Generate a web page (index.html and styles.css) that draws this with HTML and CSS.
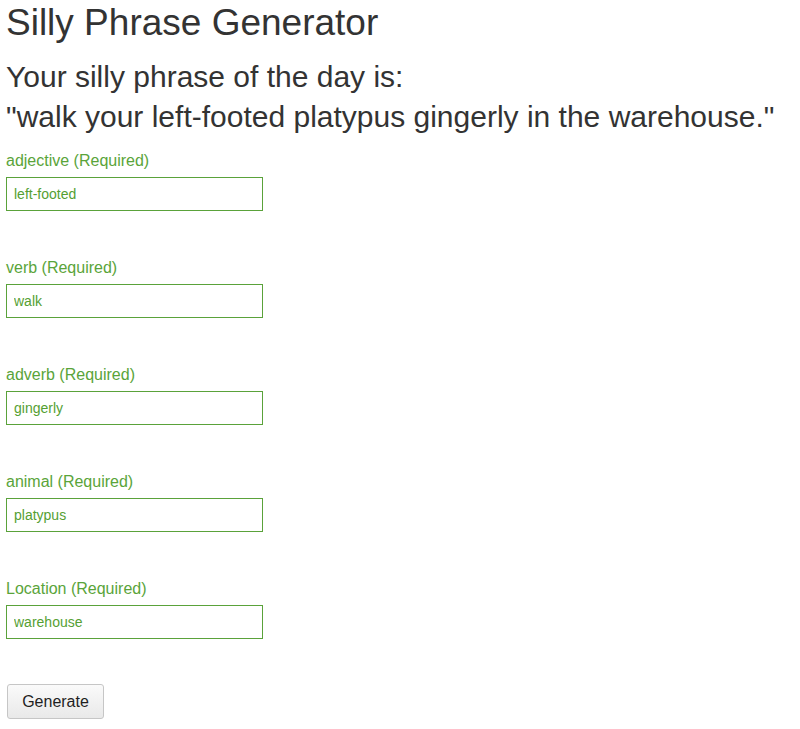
FILE: index.html
```html
<!DOCTYPE html>
<html>
<head>
<meta charset="utf-8">
<link rel="stylesheet" href="styles.css">
<title>Silly Phrase Generator</title>
</head>
<body>
<div class="page">
  <h1 class="title">Silly Phrase Generator</h1>
  <h2 class="phrase">Your silly phrase of the day is:<br>"walk your left-footed platypus gingerly in the warehouse."</h2>
  <form class="form">
    <div class="field">
      <label class="label">adjective (Required)</label>
      <input class="input" type="text" value="left-footed">
    </div>
    <div class="field">
      <label class="label">verb (Required)</label>
      <input class="input" type="text" value="walk">
    </div>
    <div class="field">
      <label class="label">adverb (Required)</label>
      <input class="input" type="text" value="gingerly">
    </div>
    <div class="field">
      <label class="label">animal (Required)</label>
      <input class="input" type="text" value="platypus">
    </div>
    <div class="field">
      <label class="label">Location (Required)</label>
      <input class="input" type="text" value="warehouse">
    </div>
    <button class="button" type="button">Generate</button>
  </form>
</div>
</body>
</html>
```

FILE: styles.css
```css
html, body {
  margin: 0;
  padding: 0;
  background: #fff;
}
body {
  font-family: "Liberation Sans", Arial, sans-serif;
  font-weight: 300;
  color: #333;
}
.page {
  padding: 0 6px;
}
.title {
  margin: 0;
  padding-top: 2px;
  font-size: 37px;
  line-height: 42px;
  font-weight: 300;
  color: #333;
}
.phrase {
  margin: 13px 0 0 0;
  font-size: 30px;
  line-height: 40px;
  font-weight: 300;
  color: #333;
}
.form {
  display: flex;
  flex-direction: column;
  align-items: flex-start;
  margin-top: 14px;
}
.field {
  display: flex;
  flex-direction: column;
  align-items: flex-start;
  margin-bottom: 47px;
}
.label {
  font-size: 16px;
  line-height: 20px;
  color: #5aa43a;
  margin-bottom: 6px;
}
.input {
  box-sizing: border-box;
  width: 257px;
  height: 34px;
  margin: 0;
  padding: 0 7px;
  border: 1px solid #5aa23a;
  border-radius: 0;
  font-family: "Liberation Sans", Arial, sans-serif;
  font-size: 14px;
  color: #55a033;
  background: #fff;
  outline: none;
}
.button {
  box-sizing: border-box;
  width: 97px;
  height: 35px;
  margin: -2px 0 0 1px;
  padding: 0;
  border: 1px solid #c6c6c6;
  border-radius: 3px;
  background: linear-gradient(#fafafa, #e9e9e9);
  font-family: "Liberation Sans", Arial, sans-serif;
  font-size: 16px;
  color: #1f1f1f;
}
```
